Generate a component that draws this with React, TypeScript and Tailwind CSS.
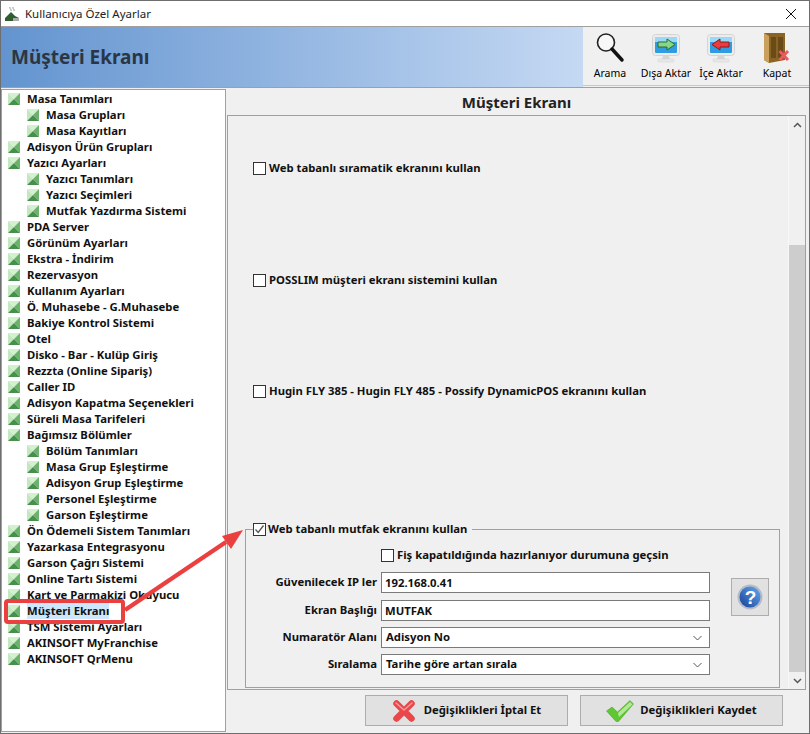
import React from 'react';

const font = 'font-["Noto_Sans",sans-serif]';

type Item = { label: string; sub?: boolean; selected?: boolean };

const TREE: Item[] = [
  { label: 'Masa Tanımları' },
  { label: 'Masa Grupları', sub: true },
  { label: 'Masa Kayıtları', sub: true },
  { label: 'Adisyon Ürün Grupları' },
  { label: 'Yazıcı Ayarları' },
  { label: 'Yazıcı Tanımları', sub: true },
  { label: 'Yazıcı Seçimleri', sub: true },
  { label: 'Mutfak Yazdırma Sistemi', sub: true },
  { label: 'PDA Server' },
  { label: 'Görünüm Ayarları' },
  { label: 'Ekstra - İndirim' },
  { label: 'Rezervasyon' },
  { label: 'Kullanım Ayarları' },
  { label: 'Ö. Muhasebe - G.Muhasebe' },
  { label: 'Bakiye Kontrol Sistemi' },
  { label: 'Otel' },
  { label: 'Disko - Bar - Kulüp Giriş' },
  { label: 'Rezzta (Online Sipariş)' },
  { label: 'Caller ID' },
  { label: 'Adisyon Kapatma Seçenekleri' },
  { label: 'Süreli Masa Tarifeleri' },
  { label: 'Bağımsız Bölümler' },
  { label: 'Bölüm Tanımları', sub: true },
  { label: 'Masa Grup Eşleştirme', sub: true },
  { label: 'Adisyon Grup Eşleştirme', sub: true },
  { label: 'Personel Eşleştirme', sub: true },
  { label: 'Garson Eşleştirme', sub: true },
  { label: 'Ön Ödemeli Sistem Tanımları' },
  { label: 'Yazarkasa Entegrasyonu' },
  { label: 'Garson Çağrı Sistemi' },
  { label: 'Online Tartı Sistemi' },
  { label: 'Kart ve Parmakizi Okuyucu' },
  { label: 'Müşteri Ekranı', selected: true },
  { label: 'TSM Sistemi Ayarları' },
  { label: 'AKINSOFT MyFranchise' },
  { label: 'AKINSOFT QrMenu' },
];

const TreeIcon = () => (
  <svg width="12" height="12" viewBox="0 0 12 12" className="shrink-0">
    <path d="M0 0H12L6 6Z" fill="#d3f1cf" />
    <path d="M0 0L6 6L0 12Z" fill="#c2e8bd" />
    <path d="M12 0V12L6 6Z" fill="#6cb16c" />
    <path d="M0 12H12L6 6Z" fill="#478f4c" />
  </svg>
);

const Check = ({ checked }: { checked?: boolean }) => (
  <span className="w-[13px] h-[13px] border border-[#333] bg-white flex items-center justify-center shrink-0">
    {checked && (
      <svg width="11" height="11" viewBox="0 0 11 11">
        <path d="M1.5 5.5L4.2 8.5L9.5 1.5" stroke="#555" strokeWidth="1.3" fill="none" />
      </svg>
    )}
  </span>
);

const Monitor = ({ dir }: { dir: 'right' | 'left' }) => (
  <svg width="28" height="29" viewBox="0 0 28 29">
    <rect x="0.5" y="0.5" width="27" height="21" rx="3" fill="#ececec" stroke="#d4d4d4" />
    <rect x="3" y="3" width="22" height="16" rx="1" fill="#2f9be0" />
    <rect x="3" y="3" width="22" height="5" fill="#9ad8f7" />
    {dir === 'right' ? (
      <path d="M6 8H15V5L23 10.5L15 16V13H6Z" fill="#86d686" stroke="#2b6b35" />
    ) : (
      <path d="M22 8H13V5L5 10.5L13 16V13H22Z" fill="#ec3b3f" stroke="#8e1a1c" />
    )}
    <path d="M11 22H17L18 25H10Z" fill="#d5d5d5" />
    <rect x="6" y="25" width="16" height="3" rx="1" fill="#e8e8e8" stroke="#d0d0d0" strokeWidth="0.5" />
  </svg>
);

const ToolButton = ({ icon, label, w }: { icon: React.ReactNode; label: string; w: string }) => (
  <div className={`${w} flex flex-col items-center shrink-0`}>
    <div className="h-[32px] flex items-center justify-center">{icon}</div>
    <span className="text-[10.5px] leading-[14px] mt-[2px] text-black whitespace-nowrap">{label}</span>
  </div>
);

const FieldLabel = ({ label }: { label: string }) => (
  <span className="w-[135px] text-right pr-[4px] text-[11.3px] font-bold text-[#111] whitespace-nowrap">{label}</span>
);

const Input = ({ label, value }: { label: string; value: string }) => (
  <div className="flex items-center h-[21px]">
    <FieldLabel label={label} />
    <div className="w-[329px] h-[21px] bg-white border border-[#7a7a7a] px-[3px] text-[11.3px] font-bold leading-[19px] text-[#111]">{value}</div>
  </div>
);

const Select = ({ label, value }: { label: string; value: string }) => (
  <div className="flex items-center h-[21px]">
    <FieldLabel label={label} />
    <div className="w-[329px] h-[21px] bg-white border border-[#7a7a7a] pl-[4px] pr-[7px] text-[11.3px] font-bold text-[#111] flex items-center justify-between">
      <span>{value}</span>
      <svg width="9" height="6" viewBox="0 0 9 6"><path d="M0.5 1L4.5 5L8.5 1" stroke="#555" fill="none" /></svg>
    </div>
  </div>
);

const Option = ({ label, top }: { label: string; top: string }) => (
  <div className={`flex items-center gap-[3px] pl-[8px] h-[14px] ${top}`}>
    <Check />
    <span className="text-[11.3px] font-bold text-[#111] whitespace-nowrap">{label}</span>
  </div>
);

export default function App() {
  return (
    <div className={`relative w-[810px] h-[734px] overflow-hidden bg-[#f0f0f0] border border-[#6e6e6e] flex flex-col ${font}`}>
      {/* title bar */}
      <div className="h-[25px] bg-white flex items-center shrink-0">
        <svg width="16" height="16" viewBox="0 0 16 16" className="ml-[3px]">
          <path d="M1 15L1 12L7 6L11 10L15 12V15Z" fill="#2f5d2f" />
          <path d="M6 1C5 3 8 3 7 5M9 1C8 3 11 3 10 5" stroke="#999" fill="none" />
          <rect x="9" y="12" width="6" height="3" fill="#aaa" />
        </svg>
        <span className="ml-[5px] text-[11.5px] text-[#222]">Kullanıcıya Özel Ayarlar</span>
        <svg width="12" height="12" viewBox="0 0 12 12" className="ml-auto mr-[12px]">
          <path d="M1 1L11 11M11 1L1 11" stroke="#111" />
        </svg>
      </div>

      {/* header */}
      <div className="h-[62px] shrink-0 flex border-y border-[#a0a0a0]">
        <div className="w-[582px] bg-gradient-to-r from-[#6394cf] to-[#c5d9f3] flex items-center pl-[10px]">
          <span className="text-[19px] font-bold text-[#2b3644]">Müşteri Ekranı</span>
        </div>
        <div className="flex-1 flex items-start pt-[5px] pl-[1px] mb-[1px] border-b border-[#c8c8c8]">
          <ToolButton
            w="w-[52px]"
            label="Arama"
            icon={
              <svg width="30" height="32" viewBox="0 0 30 32">
                <circle cx="11" cy="10.5" r="8.5" fill="#f8f8f8" stroke="#222" strokeWidth="1.6" />
                <path d="M17 17L27 28" stroke="#111" strokeWidth="3.5" strokeLinecap="round" />
              </svg>
            }
          />
          <ToolButton w="w-[60px]" label="Dışa Aktar" icon={<Monitor dir="right" />} />
          <ToolButton w="w-[50px]" label="İçe Aktar" icon={<Monitor dir="left" />} />
          <ToolButton
            w="w-[62px]"
            label="Kapat"
            icon={
              <svg width="26" height="31" viewBox="0 0 26 31">
                <path d="M0 0H21V27L5 30L0 27Z" fill="#8a6422" />
                <path d="M0 0L5 3V30L0 27Z" fill="#c9a15c" />
                <rect x="7" y="4" width="5" height="21" fill="#6a4a17" />
                <rect x="14" y="4" width="5" height="21" fill="#6a4a17" />
                <path d="M15.5 18L24 27M24 18L15.5 27" stroke="#ea5a60" strokeWidth="3" />
              </svg>
            }
          />
        </div>
      </div>

      <div className="flex flex-1 min-h-0 mt-[1px]">
        {/* tree */}
        <div className="w-[225px] shrink-0 bg-white border border-[#a0a0a0] pt-[1px] pl-[6px] mb-[1px]">
          {TREE.map((t) => (
            <div key={t.label} className={`h-[16px] flex items-center gap-[7px] ${t.sub ? 'pl-[19px]' : ''}`}>
              <TreeIcon />
              <span className={`text-[11.3px] leading-[16px] font-bold text-[#111] whitespace-nowrap ${t.selected ? 'bg-[#cce8ff]' : ''}`}>{t.label}</span>
            </div>
          ))}
        </div>

        {/* right side */}
        <div className="flex-1 flex flex-col min-w-0 mr-[3px] ml-[1px]">
          <div className="h-[26px] shrink-0 flex items-center justify-center text-[15px] font-bold text-[#222]">Müşteri Ekranı</div>
          <div className="h-[575px] shrink-0 border border-[#a0a0a0] flex">
            <div className="flex-1 flex flex-col pl-[17px] pr-[8px] pt-[45px]">
              <Option label="Web tabanlı sıramatik ekranını kullan" top="" />
              <Option label="POSSLIM müşteri ekranı sistemini kullan" top="mt-[98px]" />
              <Option label="Hugin FLY 385 - Hugin FLY 485 - Possify DynamicPOS ekranını kullan" top="mt-[97px]" />
              <div className="relative mt-[131px] h-[159px] border border-[#a0a0a0]">
                <div className="absolute -top-[8px] left-[7px] bg-[#f0f0f0] pr-[5px] flex items-center gap-[2px] h-[14px]">
                  <Check checked />
                  <span className="text-[11.3px] font-bold text-[#111] whitespace-nowrap">Web tabanlı mutfak ekranını kullan</span>
                </div>
                <div className="pt-[18px] flex">
                  <div className="flex flex-col">
                    <div className="flex items-center gap-[3px] h-[14px] pl-[135px] mb-[10px]">
                      <Check />
                      <span className="text-[11.3px] font-bold text-[#111] whitespace-nowrap">Fiş kapatıldığında hazırlanıyor durumuna geçsin</span>
                    </div>
                    <div className="flex flex-col">
                      <Input label="Güvenilecek IP ler" value="192.168.0.41" />
                      <div className="h-[7px]" />
                      <Input label="Ekran Başlığı" value="MUTFAK" />
                      <div className="h-[6px]" />
                      <Select label="Numaratör Alanı" value="Adisyon No" />
                      <div className="h-[6px]" />
                      <Select label="Sıralama" value="Tarihe göre artan sırala" />
                    </div>
                  </div>
                  <div className="ml-[21px] mt-[30px] w-[38px] h-[38px] bg-[#e1e1e1] border border-[#adadad] flex items-center justify-center">
                    <svg width="26" height="26" viewBox="0 0 26 26">
                      <defs>
                        <linearGradient id="helpBlue" x1="0" y1="1" x2="1" y2="0">
                          <stop offset="0" stopColor="#173f96" />
                          <stop offset="1" stopColor="#63a8f2" />
                        </linearGradient>
                      </defs>
                      <circle cx="13" cy="13" r="12.5" fill="#b4bbc6" />
                      <circle cx="13" cy="13" r="10.5" fill="url(#helpBlue)" />
                      <text x="13.5" y="20" textAnchor="middle" fontSize="19" fontWeight="700" fill="#fff" fontFamily="Liberation Sans">?</text>
                    </svg>
                  </div>
                </div>
              </div>
            </div>
            {/* scrollbar */}
            <div className="w-[17px] shrink-0 flex flex-col bg-[#f0f0f0] border-l border-[#f8f8f8]">
              <div className="h-[17px] flex items-center justify-center">
                <svg width="9" height="6" viewBox="0 0 9 6"><path d="M1 5L4.5 1.5L8 5" stroke="#555" strokeWidth="1.5" fill="none" /></svg>
              </div>
              <div className="h-[112px]" />
              <div className="flex-1 bg-[#cdcdcd]" />
              <div className="h-[17px] flex items-center justify-center">
                <svg width="9" height="6" viewBox="0 0 9 6"><path d="M1 1L4.5 4.5L8 1" stroke="#555" strokeWidth="1.5" fill="none" /></svg>
              </div>
            </div>
          </div>
          {/* footer */}
          <div className="flex-1 flex items-start justify-end gap-[12px] pt-[5px] pr-[23px]">
            <button className="w-[203px] h-[31px] bg-[#e1e1e1] border border-[#adadad] flex items-center justify-center gap-[8px] text-[11.3px] font-bold text-[#111]">
              <svg width="24" height="24" viewBox="0 0 24 24">
                <path d="M4.5 4.5L19.5 19.5M19.5 4.5L4.5 19.5" stroke="#e9474a" strokeWidth="6.5" strokeLinecap="round" />
                <path d="M4 4L12 11L20 4" stroke="#f89a9a" strokeWidth="1.5" fill="none" strokeLinecap="round" />
              </svg>
              Değişiklikleri İptal Et
            </button>
            <button className="w-[203px] h-[31px] bg-[#e1e1e1] border border-[#adadad] flex items-center justify-center gap-[6px] text-[11.3px] font-bold text-[#111]">
              <svg width="28" height="22" viewBox="0 0 28 22">
                <path d="M0.5 11L6 7L11.5 12L24 0.5L27.5 4L12.5 21.5H10Z" fill="#5fc634" stroke="#4b9c2a" strokeWidth="0.5" />
                <path d="M12 13L24 2L26.5 4.5L13 17Z" fill="#b4e898" />
              </svg>
              Değişiklikleri Kaydet
            </button>
          </div>
        </div>
      </div>

      {/* annotation */}
      <div className="absolute left-[3px] top-[598px] w-[121px] h-[25px] border-[4px] border-[#ea4040] rounded-[4px]" />
      <svg width="140" height="110" viewBox="0 0 140 110" className="absolute left-[112px] top-[520px]">
        <path d="M12 89L113 21" stroke="#ea4040" strokeWidth="4.5" />
        <path d="M130 9L109 15L118 28Z" fill="#ea4040" />
      </svg>
    </div>
  );
}
